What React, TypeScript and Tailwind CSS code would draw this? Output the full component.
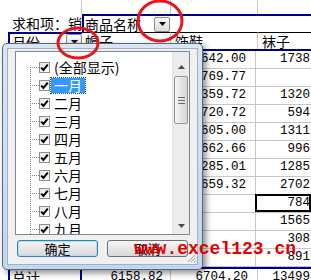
import React from 'react';

const navy = 'border-[#000080]';

const months = ['一月', '二月', '三月', '四月', '五月', '六月', '七月', '八月', '九月', '十月', '十一月', '十二月'];

const rows = [
  { m: '一月', b: '512.40', c: '1642.00', d: '1738' },
  { m: '二月', b: '498.10', c: '1769.77', d: '' },
  { m: '三月', b: '620.00', c: '359.72', d: '1320' },
  { m: '四月', b: '431.25', c: '720.72', d: '594' },
  { m: '五月', b: '575.90', c: '605.00', d: '1311' },
  { m: '六月', b: '388.00', c: '662.66', d: '996' },
  { m: '七月', b: '702.17', c: '285.01', d: '1285' },
  { m: '八月', b: '466.00', c: '659.32', d: '2702' },
  { m: '九月', b: '610.00', c: '', d: '784' },
  { m: '十月', b: '455.00', c: '', d: '1565' },
  { m: '十一月', b: '520.00', c: '', d: '308' },
  { m: '十二月', b: '380.00', c: '', d: '891' },
];

const DropButton = () => (
  <div className="flex h-[15px] w-[16px] shrink-0 items-center justify-center rounded-[2px] border border-[#8c8c8c] bg-gradient-to-b from-[#fbfbfb] to-[#dcdcdc]">
    <svg width="7" height="4" viewBox="0 0 7 4">
      <polygon points="0,0 7,0 3.5,4" fill="#000" />
    </svg>
  </div>
);

const CheckBox = () => (
  <div className="flex h-[11px] w-[11px] shrink-0 items-center justify-center border border-[#8f8f8f] bg-gradient-to-br from-[#e6e6e6] to-white">
    <svg width="9" height="9" viewBox="0 0 9 9">
      <polyline points="1.2,4.6 3.4,7 7.8,1.6" fill="none" stroke="#000" strokeWidth="2" />
    </svg>
  </div>
);

export default function App() {
  const items = ['(全部显示)', ...months];

  return (
    <div className="relative h-[280px] w-[311px] overflow-hidden bg-white text-black font-['Noto_Sans_CJK_SC',sans-serif]">
      {/* Sheet */}
      <div className="flex flex-col">
        {/* row 0 */}
        <div className="flex h-[14px]">
          <div className="w-[8px] shrink-0" />
          <div className="w-[74px] shrink-0 border-r border-[#c8c8c8]" />
          <div className="w-[89px] shrink-0 border-r border-[#c8c8c8]" />
          <div className="w-[87px] shrink-0 border-r border-[#c8c8c8]" />
          <div className="flex-1" />
        </div>

        {/* row 1: page field */}
        <div className="flex h-[18px]">
          <div className="w-[8px] shrink-0" />
          <div className="flex w-[74px] shrink-0 items-center overflow-hidden whitespace-nowrap pl-[4px] text-[14px] leading-none">
            求和项：销售额
          </div>
          <div className={`flex flex-1 border-l-2 border-t-2 ${navy}`}>
            <div className="flex w-[87px] shrink-0 items-center justify-between pl-[1px] pr-px text-[14px] leading-none">
              <span>商品名称</span>
              <DropButton />
            </div>
          </div>
        </div>

        {/* row 2: headers */}
        <div className="flex h-[19px]">
          <div className="w-[8px] shrink-0" />
          <div className={`flex flex-1 border-b-2 ${navy}`}>
            <div className={`flex w-[74px] shrink-0 items-center justify-between border-l-2 border-t-2 ${navy} pl-[2px] text-[14px] leading-none`}>
              <span>月份</span>
              <DropButton />
            </div>
            <div className="flex w-[89px] shrink-0 items-center border-r border-t border-r-[#c8c8c8] border-t-black pl-[3px] text-[14px] leading-none">
              帽子
            </div>
            <div className="flex w-[87px] shrink-0 items-center border-r border-t border-r-[#c8c8c8] border-t-black pl-[4px] text-[14px] leading-none">
              饰鞋
            </div>
            <div className="flex flex-1 items-center border-t border-black pl-[4px] text-[14px] leading-none">
              袜子
            </div>
          </div>
        </div>

        {/* data rows */}
        {rows.map((r, i) => (
          <div key={i} className="flex h-[18px]">
            <div className={`w-[8px] shrink-0 border-r-2 ${navy}`} />
            <div className="flex flex-1 border-b border-[#c8c8c8] font-['Liberation_Mono',monospace] text-[12.5px] leading-none">
              <div className="flex w-[72px] shrink-0 items-end border-r border-[#c8c8c8] pb-[2px] pl-[2px] font-['Noto_Sans_CJK_SC',sans-serif] text-[14px]">
                {r.m}
              </div>
              <div className="flex w-[89px] shrink-0 items-end justify-end border-r border-[#c8c8c8] pb-[3px] pr-[7px]">
                {r.b}
              </div>
              <div className="flex w-[87px] shrink-0 items-end justify-end border-r border-[#c8c8c8] pb-[3px] pr-[9px]">
                {r.c}
              </div>
              <div className="relative flex flex-1 items-end justify-end pb-[3px] pr-[1px]">
                {r.d}
                {r.d === '784' && (
                  <span className="absolute -left-px -top-px bottom-0 right-0 border-2 border-black" />
                )}
              </div>
            </div>
          </div>
        ))}

        {/* total row */}
        <div className="flex h-[18px]">
          <div className="w-[8px] shrink-0" />
          <div className={`flex flex-1 border-l-2 border-t-2 ${navy} font-['Liberation_Mono',monospace] text-[12.5px] leading-none`}>
            <div className={`flex w-[72px] shrink-0 items-center border-r-2 ${navy} pl-[2px] font-['Noto_Sans_CJK_SC',sans-serif] text-[14px]`}>
              总计
            </div>
            <div className="flex w-[89px] shrink-0 items-center justify-end border-r border-[#c8c8c8] pr-[7px]">6158.82</div>
            <div className="flex w-[87px] shrink-0 items-center justify-end border-r border-[#c8c8c8] pr-[9px]">6704.20</div>
            <div className="flex flex-1 items-center justify-end pr-[1px]">13499</div>
          </div>
        </div>
      </div>

      {/* Filter popup */}
      <div className="absolute left-[2px] top-[43px] h-[227px] w-[201px] rounded-[5px] border border-[#56697e] bg-gradient-to-b from-[#dae6f4] to-[#c3d6ee] p-[4px] shadow-[3px_3px_6px_rgba(0,0,0,0.45)]">
        <div className="relative h-full border border-[#9fb2c8] bg-[#f0f0f0] pl-[7px] pt-[2px]">
          {/* list */}
          <div className="flex h-[184px] w-[175px] overflow-hidden border border-[#828790] bg-white">
            <div className="relative flex-1 overflow-hidden pt-[6px]">
              <div className="absolute bottom-0 left-[14px] top-[15px] border-l border-dotted border-[#8c8c8c]" />
              {items.map((label, i) => (
                <div key={label} className="flex h-[18px] items-center pl-[14px]">
                  <span className="w-[9px] shrink-0 border-t border-dotted border-[#8c8c8c]" />
                  <CheckBox />
                  <span
                    className={`ml-px h-[15px] whitespace-nowrap px-[3px] text-[14px] leading-[15px] ${
                      i === 1 ? 'bg-[#3399ff] text-white outline-1 outline-dotted outline-[#1a4f8a]' : ''
                    }`}
                  >
                    {label}
                  </span>
                </div>
              ))}
            </div>

            {/* scrollbar */}
            <div className="flex w-[17px] shrink-0 flex-col border-l border-[#e2e2e2] bg-[#ececec]">
              <div className="flex h-[24px] items-end justify-center pb-[7px]">
                <svg width="7" height="4" viewBox="0 0 7 4">
                  <polygon points="0,4 7,4 3.5,0" fill="#4a4a4a" />
                </svg>
              </div>
              <div className="mx-px flex h-[48px] flex-col items-center justify-center gap-[2px] rounded-[2px] border border-[#959595] bg-gradient-to-r from-[#f5f5f5] to-[#d6d6d6]">
                <span className="h-px w-[7px] bg-[#6a6a6a]" />
                <span className="h-px w-[7px] bg-[#6a6a6a]" />
                <span className="h-px w-[7px] bg-[#6a6a6a]" />
              </div>
              <div className="flex-1" />
              <div className="flex h-[17px] items-center justify-center">
                <svg width="7" height="4" viewBox="0 0 7 4">
                  <polygon points="0,0 7,0 3.5,4" fill="#4a4a4a" />
                </svg>
              </div>
            </div>
          </div>

          {/* buttons */}
          <div className="mt-[5px] flex gap-[9px] pl-[2px]">
            <button className="flex h-[17px] w-[81px] items-center justify-center rounded-[3px] border border-[#3c7fb1] bg-gradient-to-b from-[#f6f6f6] to-[#d8d8d8] text-[13px] leading-none shadow-[inset_0_0_0_1px_#a8e0fb]">
              确定
            </button>
            <button className="flex h-[17px] w-[81px] items-center justify-center rounded-[3px] border border-[#707070] bg-gradient-to-b from-[#f6f6f6] to-[#d8d8d8] text-[13px] leading-none">
              取消
            </button>
          </div>

          {/* resize grip */}
          <svg className="absolute bottom-[1px] right-[1px]" width="10" height="10" viewBox="0 0 10 10">
            <line x1="9" y1="2" x2="2" y2="9" stroke="#a0a0a0" strokeWidth="1" />
            <line x1="9" y1="5" x2="5" y2="9" stroke="#a0a0a0" strokeWidth="1" />
            <line x1="9" y1="8" x2="8" y2="9" stroke="#a0a0a0" strokeWidth="1" />
          </svg>
        </div>
      </div>

      {/* watermark */}
      <div className="pointer-events-none absolute left-[134px] top-[240px] whitespace-nowrap font-['Liberation_Mono',monospace] text-[18px] font-bold leading-[18px] text-[#e00000]">
        www.excel123.cn
      </div>

      {/* red annotation circles */}
      <svg className="pointer-events-none absolute left-0 top-0" width="311" height="280" viewBox="0 0 311 280">
        <ellipse cx="160" cy="21" rx="22" ry="20" fill="none" stroke="#e8141c" strokeWidth="3" />
        <ellipse cx="78" cy="43" rx="20" ry="15" fill="none" stroke="#e8141c" strokeWidth="3" />
      </svg>
    </div>
  );
}
